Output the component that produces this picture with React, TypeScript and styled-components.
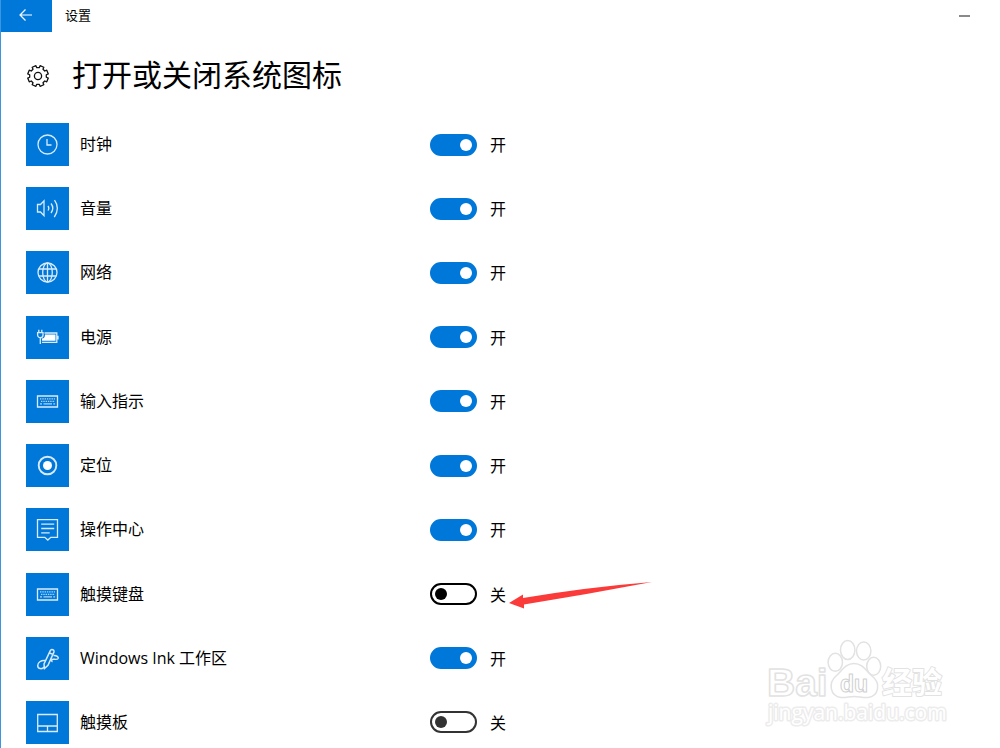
import React, { useState } from "react";
import styled, { createGlobalStyle } from "styled-components";

const GlobalStyle = createGlobalStyle`
  *, *::before, *::after { box-sizing: border-box; }
  body {
    margin: 0;
    background: #fff;
    color: #000;
    font-family: "Open Sans", "Noto Sans CJK SC", sans-serif;
    font-size: 16px;
    line-height: 24px;
  }
`;

const Window = styled.div`
  position: relative;
  display: flex;
  flex-direction: column;
  min-height: 100vh;
  border-left: 1px solid #3a96e0;
  overflow: hidden;
`;

const TitleBar = styled.header`
  display: flex;
  align-items: center;
  height: 32px;
`;

const BackButton = styled.button`
  display: grid;
  place-items: center;
  width: 51px;
  height: 32px;
  padding: 0 2px 2px 0;
  border: 0;
  background: #0078d9;
  color: #fff;
`;

const WindowTitle = styled.span`
  flex: 1;
  padding: 0 0 2px 13px;
  font-size: 13px;
`;

const MinimizeButton = styled.button`
  display: grid;
  place-items: center;
  width: 46px;
  height: 30px;
  margin-right: 13px;
  padding: 0;
  border: 0;
  background: transparent;

  &::before {
    content: "";
    width: 11px;
    height: 2px;
    background: #8a8a8a;
  }
`;

const Content = styled.main`
  flex: 1;
  display: flex;
  flex-direction: column;
  padding: 24px 25px 4px;
`;

const Heading = styled.div`
  display: flex;
  align-items: center;
  gap: 23px;
  height: 40px;
  margin-bottom: 27px;
`;

const PageTitle = styled.h1`
  margin: 0;
  padding-bottom: 2px;
  font-size: 30px;
  font-weight: 400;
  line-height: 40px;
`;

const SettingList = styled.ul`
  flex: 1;
  display: flex;
  flex-direction: column;
  justify-content: space-between;
  gap: 21px;
  margin: 0;
  padding: 0;
  list-style: none;
`;

const SettingRow = styled.li`
  display: grid;
  grid-template-columns: 43px minmax(160px, 339px) auto;
  justify-content: start;
  align-items: center;
  column-gap: 11px;
  height: 43px;
`;

const IconTile = styled.span`
  display: grid;
  place-items: center;
  width: 43px;
  height: 43px;
  background: #0078d9;
  color: #d9ebfb;
`;

const SettingLabel = styled.label`
  padding-bottom: 1px;
`;

const SwitchGroup = styled.div`
  position: relative;
  display: flex;
  align-items: center;
  gap: 13px;
`;

const Switch = styled.input<{ $ink: string }>`
  appearance: none;
  display: flex;
  align-items: center;
  width: 47px;
  height: 22px;
  margin: 0;
  padding: 0 3px;
  border: 2px solid ${(p) => p.$ink};
  border-radius: 11px;
  background: #fff;

  &::before {
    content: "";
    width: 12px;
    height: 12px;
    border-radius: 50%;
    background: ${(p) => p.$ink};
  }

  &:checked {
    justify-content: flex-end;
    border-color: #0078d9;
    background: #0078d9;
  }

  &:checked::before {
    background: #fff;
  }
`;

const SwitchState = styled.span`
  padding-top: 1px;
`;

const Pointer = styled.svg`
  position: absolute;
  left: 79px;
  top: 0;
  pointer-events: none;
`;

const Watermark = styled.svg`
  position: absolute;
  right: 40px;
  bottom: 8px;
  pointer-events: none;
`;

const HeadingIcon = styled.svg`
  margin-left: 1px;
`;

const icons: Record<string, React.ReactNode> = {
  clock: (
    <>
      <circle cx="12.5" cy="12.5" r="9.5" />
      <path d="M12 7v6h4.5" />
    </>
  ),
  volume: (
    <>
      <path d="M2.5 8.5h3l3.5-3.7v14.900l-3.500-3.700h-3z" />
      <path d="M13 10q1.600 2.200 0 4.500M16 7.500q3.600 4.700 0 9.500M19.500 4.200q5.800 8-.2 17" />
    </>
  ),
  globe: (
    <>
      <circle cx="12.5" cy="12.5" r="9.5" />
      <ellipse cx="12.5" cy="12.5" rx="4.8" ry="9.5" />
      <path d="M12.5 3v19M3.8 9h17.4M3.8 16h17.4" />
    </>
  ),
  power: (
    <>
      <path d="M3.8 4.800v3M6.800 4.800v3" />
      <path d="M2.600 7.600h5.400v2.400a2.700 2.700 0 0 1-5.400 0zM5.300 12.500v6.500" />
      <path d="M9.500 8h12.300v9.300H7M23 10.800v3.600" />
      <path d="M10 9.500h10.500v6.300H7v-2.300c2 0 3-1.500 3-4z" fill="#fff" stroke="none" />
    </>
  ),
  keyboard: (
    <>
      <path d="M2.5 7h20v11h-20z" />
      <path d="M5 9.8h15M6 12.3h14" strokeDasharray="1.4 .9" strokeWidth="1.3" opacity=".8" />
      <path d="M5 14.9h2M8.5 14.9h8.5M18.3 14.9h1.8" strokeWidth="1.3" opacity=".8" />
    </>
  ),
  location: (
    <>
      <circle cx="12.5" cy="12.5" r="8.8" strokeWidth="1.9" />
      <circle cx="12.5" cy="12.5" r="4.5" fill="#fff" stroke="none" />
    </>
  ),
  action: (
    <>
      <path d="M2.5 2.7h20v17.6h-6.7l-3 2.8-3-2.8H2.5z" />
      <path d="M6.2 7.2h13M6.2 11.500h13M6.2 15.800h8.500" />
    </>
  ),
  ink: (
    <g strokeWidth="1.5">
      <path d="M9 18L15.300 4.600c1-2.100 4.500-.7 3.600 1.500L13 19.300l-3.500 3.200zM14.600 7l3.200 1.400" />
      <path d="M10.300 14.500C6 14 2.500 16.600 2.700 19.800c.2 3.500 4.600 3.600 6.600 1.200M18.500 9.500c3.400-.2 5.300 1.400 4.600 3-.8 1.600-3.400.6-5 .7-2 .1-2.200 1.800-.6 2.500" />
    </g>
  ),
  touchpad: <path d="M2.7 4.5h19.600v17H2.700zM2.700 16h19.600M12.500 16v5.500" />,
};

const Glyph = ({ name }: { name: string }) => (
  <svg width="25" height="25" viewBox="0 0 25 25" fill="none" stroke="currentColor" strokeWidth="1.3" aria-hidden="true">
    {icons[name]}
  </svg>
);

type Setting = { id: string; label: string; icon: string; on: boolean; ink?: string; marked?: boolean };

const settings: Setting[] = [
  { id: "clock", label: "时钟", icon: "clock", on: true },
  { id: "volume", label: "音量", icon: "volume", on: true },
  { id: "network", label: "网络", icon: "globe", on: true },
  { id: "power", label: "电源", icon: "power", on: true },
  { id: "input", label: "输入指示", icon: "keyboard", on: true },
  { id: "location", label: "定位", icon: "location", on: true },
  { id: "action", label: "操作中心", icon: "action", on: true },
  { id: "touch-keyboard", label: "触摸键盘", icon: "keyboard", on: false, marked: true },
  { id: "ink", label: "Windows Ink 工作区", icon: "ink", on: true },
  { id: "touchpad", label: "触摸板", icon: "touchpad", on: false, ink: "#333" },
];

const SettingItem = ({ setting }: { setting: Setting }) => {
  const [on, setOn] = useState(setting.on);
  return (
    <SettingRow>
      <IconTile>
        <Glyph name={setting.icon} />
      </IconTile>
      <SettingLabel htmlFor={setting.id}>{setting.label}</SettingLabel>
      <SwitchGroup>
        <Switch
          id={setting.id}
          type="checkbox"
          role="switch"
          checked={on}
          onChange={(e) => setOn(e.target.checked)}
          $ink={setting.ink ?? "#000"}
        />
        <SwitchState>{on ? "开" : "关"}</SwitchState>
        {setting.marked && (
          <Pointer width="144" height="28" viewBox="0 0 144 28" aria-hidden="true">
            <path d="M0 21L14 12.500V16Q80 5 143 0Q80 12 15 22.500V26.500Z" fill="#fb3a3a" />
          </Pointer>
        )}
      </SwitchGroup>
    </SettingRow>
  );
};

// Eight-toothed cog outline, centred in a 24-unit box.
const cogPath = (() => {
  const points: string[] = [];
  for (let i = 0; i < 8; i++) {
    [
      [-14, 8.4],
      [-11, 10.5],
      [11, 10.5],
      [14, 8.4],
    ].forEach(([offset, radius]) => {
      const a = ((i * 45 + 22.5 + offset) * Math.PI) / 180;
      points.push(`${(12 + radius * Math.cos(a)).toFixed(2)} ${(12 + radius * Math.sin(a)).toFixed(2)}`);
    });
  }
  return `M${points.join("L")}Z`;
})();

export default function App() {
  return (
    <>
      <GlobalStyle />
      <Window>
        <TitleBar>
          <BackButton aria-label="返回">
            <svg width="14" height="12" viewBox="0 0 14 12" fill="none" stroke="currentColor" strokeWidth="1.2" aria-hidden="true">
              <path d="M6.500 .5L1 6l5.500 5.500M1 6h12" />
            </svg>
          </BackButton>
          <WindowTitle>设置</WindowTitle>
          <MinimizeButton aria-label="最小化" />
        </TitleBar>
        <Content>
          <Heading>
            <HeadingIcon width="22" height="22" viewBox="1 1 22 22" fill="none" stroke="#111" strokeWidth="1.3" strokeLinejoin="round" aria-hidden="true">
              <path d={cogPath} />
              <circle cx="12" cy="12" r="3.600" />
            </HeadingIcon>
            <PageTitle>打开或关闭系统图标</PageTitle>
          </Heading>
          <SettingList>
            {settings.map((s) => (
              <SettingItem key={s.id} setting={s} />
            ))}
          </SettingList>
        </Content>
        <Watermark width="210" height="110" viewBox="0 0 210 110" fill="#fff" stroke="#e2e2e2" strokeWidth="1.5" strokeLinejoin="round">
          <text x="17" y="66" fontSize="39" fontFamily='"Liberation Sans", sans-serif' fontWeight="700">Bai</text>
          <text x="132" y="63" fontSize="30" fontFamily='"Noto Sans CJK SC", sans-serif' fontWeight="700" strokeWidth="2" paintOrder="stroke">经验</text>
          <ellipse cx="85.300" cy="32.300" rx="7.200" ry="9" />
          <ellipse cx="97.700" cy="20" rx="7.200" ry="9.500" />
          <ellipse cx="113.700" cy="21" rx="7.200" ry="9" />
          <ellipse cx="123.700" cy="36.300" rx="7" ry="9" />
          <path d="M104 33.500C95 33.500 92 41 86 46C78 53 80 66 91 67.500C96 68 99 66.500 104 66.500S113 68 118 67.500C129 66 131 53 122 46C116 41 113 33.500 104 33.500Z" />
          <text x="90" y="62" fontSize="23" fontWeight="700" fontFamily='"Liberation Sans", sans-serif' strokeWidth="1" stroke="#d0d0d0">du</text>
          <text x="18" y="90" fontSize="21" fontFamily='"Open Sans", sans-serif' strokeWidth="3" stroke="#ececec" paintOrder="stroke">jingyan.baidu.com</text>
        </Watermark>
      </Window>
    </>
  );
}
